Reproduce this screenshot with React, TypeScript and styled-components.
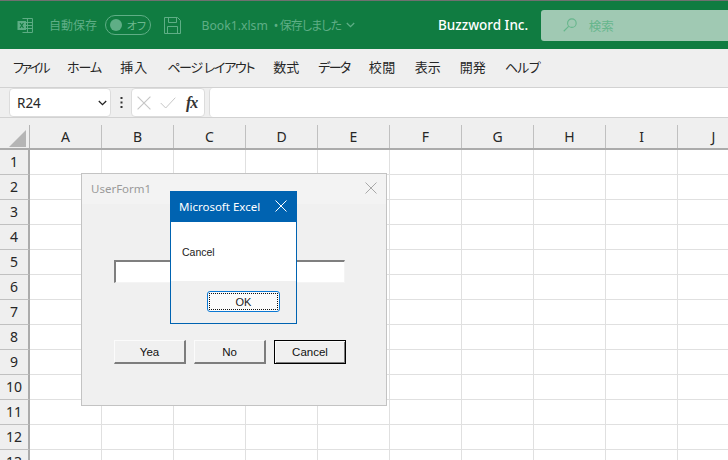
import React from "react";
import styled, { createGlobalStyle } from "styled-components";

const FONT = `"Noto Sans", "Noto Sans CJK JP", sans-serif`;
const Global = createGlobalStyle`
  html, body { margin: 0; padding: 0; width: 728px; height: 460px; overflow: hidden; background: #fff; }
  * { box-sizing: border-box; }
  body { font-family: ${FONT}; }
`;
const Page = styled.div`
  width: 728px; height: 460px; display: flex; flex-direction: column; overflow: hidden;
  background: #efefef; position: relative;
`;
const TitleBar = styled.div`
  height: 49px; flex: none; display: flex; align-items: center; background: #107c41;
  border-top: 1px solid #707070; padding: 0 0 0 17px; color: #5fae86; font-size: 12px;
`;
const AutoSave = styled.span`margin-left: 15px; width: 55px; white-space: nowrap; font-size: 12px;`;
const Toggle = styled.span`
  width: 46px; height: 20px; border: 1px solid #5fae86; border-radius: 10px; display: flex; margin-left: 1px;
  align-items: center; padding-left: 4px; gap: 5px; font-size: 11px; color: #6db890; white-space: nowrap;
  font-feature-settings: "palt";
`;
const Knob = styled.i`width: 12px; height: 12px; border-radius: 50%; background: #5fae86; display: block; flex: none;`;
const SaveSlot = styled.span`margin-left: 13px; display: flex;`;
const DocName = styled.span`margin-left: 21px; width: 160px; white-space: nowrap; display: flex; align-items: center; font-size: 12.2px;`;
const Saved = styled.span`margin: 0 5px 0 6px; font-size: 12px; letter-spacing: -.9px; font-feature-settings: "palt";`;
const Company = styled.span`margin-left: 77px; width: 92px; white-space: nowrap; color: #fff; font-weight: 500; font-size: 13.5px;`;
const Search = styled.div`
  margin-left: 11px; width: 188px; height: 31px; border-radius: 3px 0 0 3px; background: #a0c9b3;
  display: flex; align-items: center; padding-left: 22px; gap: 12px; color: #66b68c; font-size: 12.5px;
`;
const Tabs = styled.div`
  height: 38px; flex: none; display: flex; align-items: center; padding: 0 0 3px 13px; gap: 19px;
  font-size: 13px; color: #262626; font-feature-settings: "palt";
`;
const Tab = styled.span<{ $track: number }>`white-space: pre; letter-spacing: ${p => p.$track}px;`;
const FormulaRow = styled.div`
  height: 31px; flex: none; display: flex; align-items: stretch; position: relative;
  border-top: 1px solid #d2d2d2; border-bottom: 1px solid #d2d2d2; background: #efefef;
`;
const NameBox = styled.div`
  margin: 0 0 0 9px; width: 102px; background: #fff; border: 1px solid #dcdcdc; border-radius: 4px; display: flex;
  align-items: center; justify-content: space-between; padding: 0 3px 0 7px; font-size: 13.5px; color: #262626;
`;
const Dots = styled.span`width: 20px; display: flex; justify-content: center; align-items: center;`;
const FxBox = styled.div`
  width: 74px; background: #fff; border: 1px solid #dcdcdc; border-radius: 4px; display: flex;
  align-items: center; padding-left: 5px; gap: 9px;
`;
const FxText = styled.span`font-family: "Liberation Serif", serif; font-style: italic; font-weight: 700; font-size: 16px; color: #333; margin-left: 1px; letter-spacing: -1px;`;
const FormulaInput = styled.div`flex: 1; margin-left: 4px; background: #fff; border-left: 1px solid #dcdcdc; border-radius: 4px 0 0 4px;`;
const Spacer = styled.div`height: 7px; flex: none;`;
const Sheet = styled.div`display: flex; flex-direction: column; flex: none; background: #fff;`;
const HeaderRow = styled.div`
  display: flex; height: 25px; flex: none; background: #efefef; border-bottom: 2px solid #ababab;
`;
const Corner = styled.div`width: 30px; flex: none; border-right: 1px solid #b4b4b4; display: flex; align-items: flex-end; padding: 0 0 1px 9px;`;
const ColHead = styled.div`
  width: 72px; flex: none; border-right: 1px solid #c0c0c0; display: flex; align-items: center; justify-content: center;
  font-size: 14px; color: #262626; padding-bottom: 1px;
`;
const Row = styled.div`display: flex; height: 25px; flex: none;`;
const RowHead = styled.div`
  width: 30px; flex: none; background: #efefef; border-right: 2px solid #ababab; border-bottom: 1px solid #c0c0c0;
  display: flex; align-items: center; justify-content: center; font-size: 14px; color: #262626; padding-bottom: 2px;
`;
const Cell = styled.div`width: 72px; flex: none; border-right: 1px solid #e0e0e0; border-bottom: 1px solid #e0e0e0;`;

const UserForm = styled.div`
  position: absolute; left: 81px; top: 173px; width: 306px; height: 233px; background: #f0f0f0;
  border: 1px solid #c3c3c3; display: flex; flex-direction: column;
`;
const FormTitle = styled.div`
  height: 30px; flex: none; background: #f3f3f3; display: flex; align-items: center; justify-content: space-between;
  padding: 0 9px 2px 9px; color: #9a9a9a; font-size: 11.5px;
`;
const FormBody = styled.div`padding: 56px 0 0 32px; display: flex; flex-direction: column; gap: 57px;`;
const TextBox = styled.div`
  width: 231px; height: 23px; background: #fff; border-style: solid; border-width: 2px 1px 1px 2px;
  border-color: #7f7f7f #f4f4f4 #f4f4f4 #7f7f7f;
`;
const Buttons = styled.div`display: flex; gap: 8px;`;
const FormButton = styled.div<{ $default?: boolean }>`
  width: 72px; height: 24px; display: flex; align-items: center; justify-content: center; background: #f0f0f0;
  font-size: 11.5px; color: #111; font-family: "Liberation Sans", sans-serif;
  border-style: solid; border-width: 1px 2px 2px 1px;
  border-color: ${p => p.$default ? "#000" : "#fbfbfb #7d7d7d #7d7d7d #fbfbfb"};
  ${p => p.$default ? `border-width: 1px; box-shadow: inset 1px 1px 0 #fbfbfb, inset -1px -1px 0 #7d7d7d;` : ""}
`;
const MsgBox = styled.div`
  position: absolute; left: 170px; top: 191px; width: 127px; height: 133px; background: #f0f0f0;
  border: 1px solid #0063b1; display: flex; flex-direction: column;
`;
const MsgTitle = styled.div`
  height: 30px; flex: none; background: #0063b1; color: #fff; display: flex; align-items: center; justify-content: space-between;
  padding: 0 9px 2px 8px; font-size: 11.5px; white-space: nowrap;
`;
const MsgBody = styled.div`height: 59px; flex: none; background: #fff; padding: 24px 0 0 11px; font-size: 10.5px; color: #222; font-family: "Liberation Sans", sans-serif;`;
const MsgFoot = styled.div`flex: 1; display: flex; justify-content: flex-end; padding: 10px 16px 0 0;`;
const OkButton = styled.div`
  width: 73px; height: 21px; border: 1px solid #0a78d4; border-radius: 3px; background: #fbfbfb; position: relative;
  display: flex; align-items: center; justify-content: center; font-size: 11px; color: #222; font-family: "Liberation Sans", sans-serif;
  &::after { content: ""; position: absolute; inset: 1px; border: 1px dotted #111; }
`;

const ExcelIcon = () => (
  <svg width="17" height="17" viewBox="0 0 17 17" fill="none" stroke="#5fae86" strokeWidth="1">
    <path d="M5.5 1.5h10v14h-10M10.5 1.5v14M5.5 5.5h10M5.5 8.5h10M5.5 11.5h10" />
    <rect x="0.5" y="4" width="8.5" height="9" fill="#5fae86" stroke="none" />
    <path d="M3 6l3.5 5M6.5 6L3 11" stroke="#107c41" strokeWidth="1.2" />
  </svg>
);
const SaveIcon = () => (
  <svg width="17" height="17" viewBox="0 0 17 17" fill="none" stroke="#5fae86" strokeWidth="1">
    <path d="M.5.5h13l3 3v13H.5zM4.5.5v5h8v-5M3.5 16.5v-7h10v7" />
  </svg>
);
const ChevronSvg = styled.svg`flex: none;`;
const Chevron = ({ color }: { color: string }) => (
  <ChevronSvg width="9" height="6" viewBox="0 0 9 6" fill="none" stroke={color} strokeWidth="1.3"><path d="M.8 1l3.7 3.7L8.2 1" /></ChevronSvg>
);
const SearchIcon = () => (
  <svg width="14" height="14" viewBox="0 0 15 15" fill="none" stroke="#66b68c" strokeWidth="1.2">
    <circle cx="9.5" cy="5.5" r="4.6" /><path d="M6 9L.8 14.2" />
  </svg>
);
const XIcon = ({ color, size = 12 }: { color: string; size?: number }) => (
  <svg width={size} height={size} viewBox="0 0 12 12" fill="none" stroke={color} strokeWidth="1"><path d="M.5.5l11 11M11.5.5l-11 11" /></svg>
);
const CheckIcon = () => (
  <svg width="16" height="12" viewBox="0 0 16 12" fill="none" stroke="#c6c6c6" strokeWidth="1"><path d="M.7 6l5 5L15.3.7" /></svg>
);
const DotsIcon = () => (
  <svg width="3" height="11" viewBox="0 0 3 11" fill="#333"><rect x=".5" width="2" height="2" /><rect x=".5" y="4.5" width="2" height="2" /><rect x=".5" y="9" width="2" height="2" /></svg>
);
const CornerIcon = () => (
  <svg width="17" height="17" viewBox="0 0 17 17"><path d="M17 0v17H0z" fill="#b5b5b5" /></svg>
);

const tabs: [string, number][] = [
  ["ファイル", -2.5], ["ホーム", -1], ["挿入", 1], ["ページ レイアウト", -1.3], ["数式", 0],
  ["データ", -1.6], ["校閲", 0.5], ["表示", 0], ["開発", 0], ["ヘルプ", -0.7],
];
const cols = ["A", "B", "C", "D", "E", "F", "G", "H", "I", "J"];
const rows = Array.from({ length: 13 }, (_, i) => i + 1);

export default function App() {
  return (
    <Page>
      <Global />
      <TitleBar>
        <ExcelIcon />
        <AutoSave>自動保存</AutoSave>
        <Toggle><Knob />オフ</Toggle>
        <SaveSlot><SaveIcon /></SaveSlot>
        <DocName>Book1.xlsm<Saved>• 保存しました</Saved><Chevron color="#5fae86" /></DocName>
        <Company>Buzzword Inc.</Company>
        <Search><SearchIcon />検索</Search>
      </TitleBar>
      <Tabs>{tabs.map(([t, track]) => <Tab key={t} $track={track}>{t}</Tab>)}</Tabs>
      <FormulaRow>
        <NameBox>R24<Chevron color="#222" /></NameBox>
        <Dots><DotsIcon /></Dots>
        <FxBox><XIcon color="#c6c6c6" size={14} /><CheckIcon /><FxText>fx</FxText></FxBox>
        <FormulaInput />
      </FormulaRow>
      <Spacer />
      <Sheet>
        <HeaderRow>
          <Corner><CornerIcon /></Corner>
          {cols.map(c => <ColHead key={c}>{c}</ColHead>)}
        </HeaderRow>
        {rows.map(r => (
          <Row key={r}>
            <RowHead>{r}</RowHead>
            {cols.map(c => <Cell key={c} />)}
          </Row>
        ))}
      </Sheet>
      <UserForm>
        <FormTitle>UserForm1<XIcon color="#a8a8a8" /></FormTitle>
        <FormBody>
          <TextBox />
          <Buttons>
            <FormButton>Yea</FormButton>
            <FormButton>No</FormButton>
            <FormButton $default>Cancel</FormButton>
          </Buttons>
        </FormBody>
      </UserForm>
      <MsgBox>
        <MsgTitle>Microsoft Excel<XIcon color="#fff" /></MsgTitle>
        <MsgBody>Cancel</MsgBody>
        <MsgFoot><OkButton>OK</OkButton></MsgFoot>
      </MsgBox>
    </Page>
  );
}
